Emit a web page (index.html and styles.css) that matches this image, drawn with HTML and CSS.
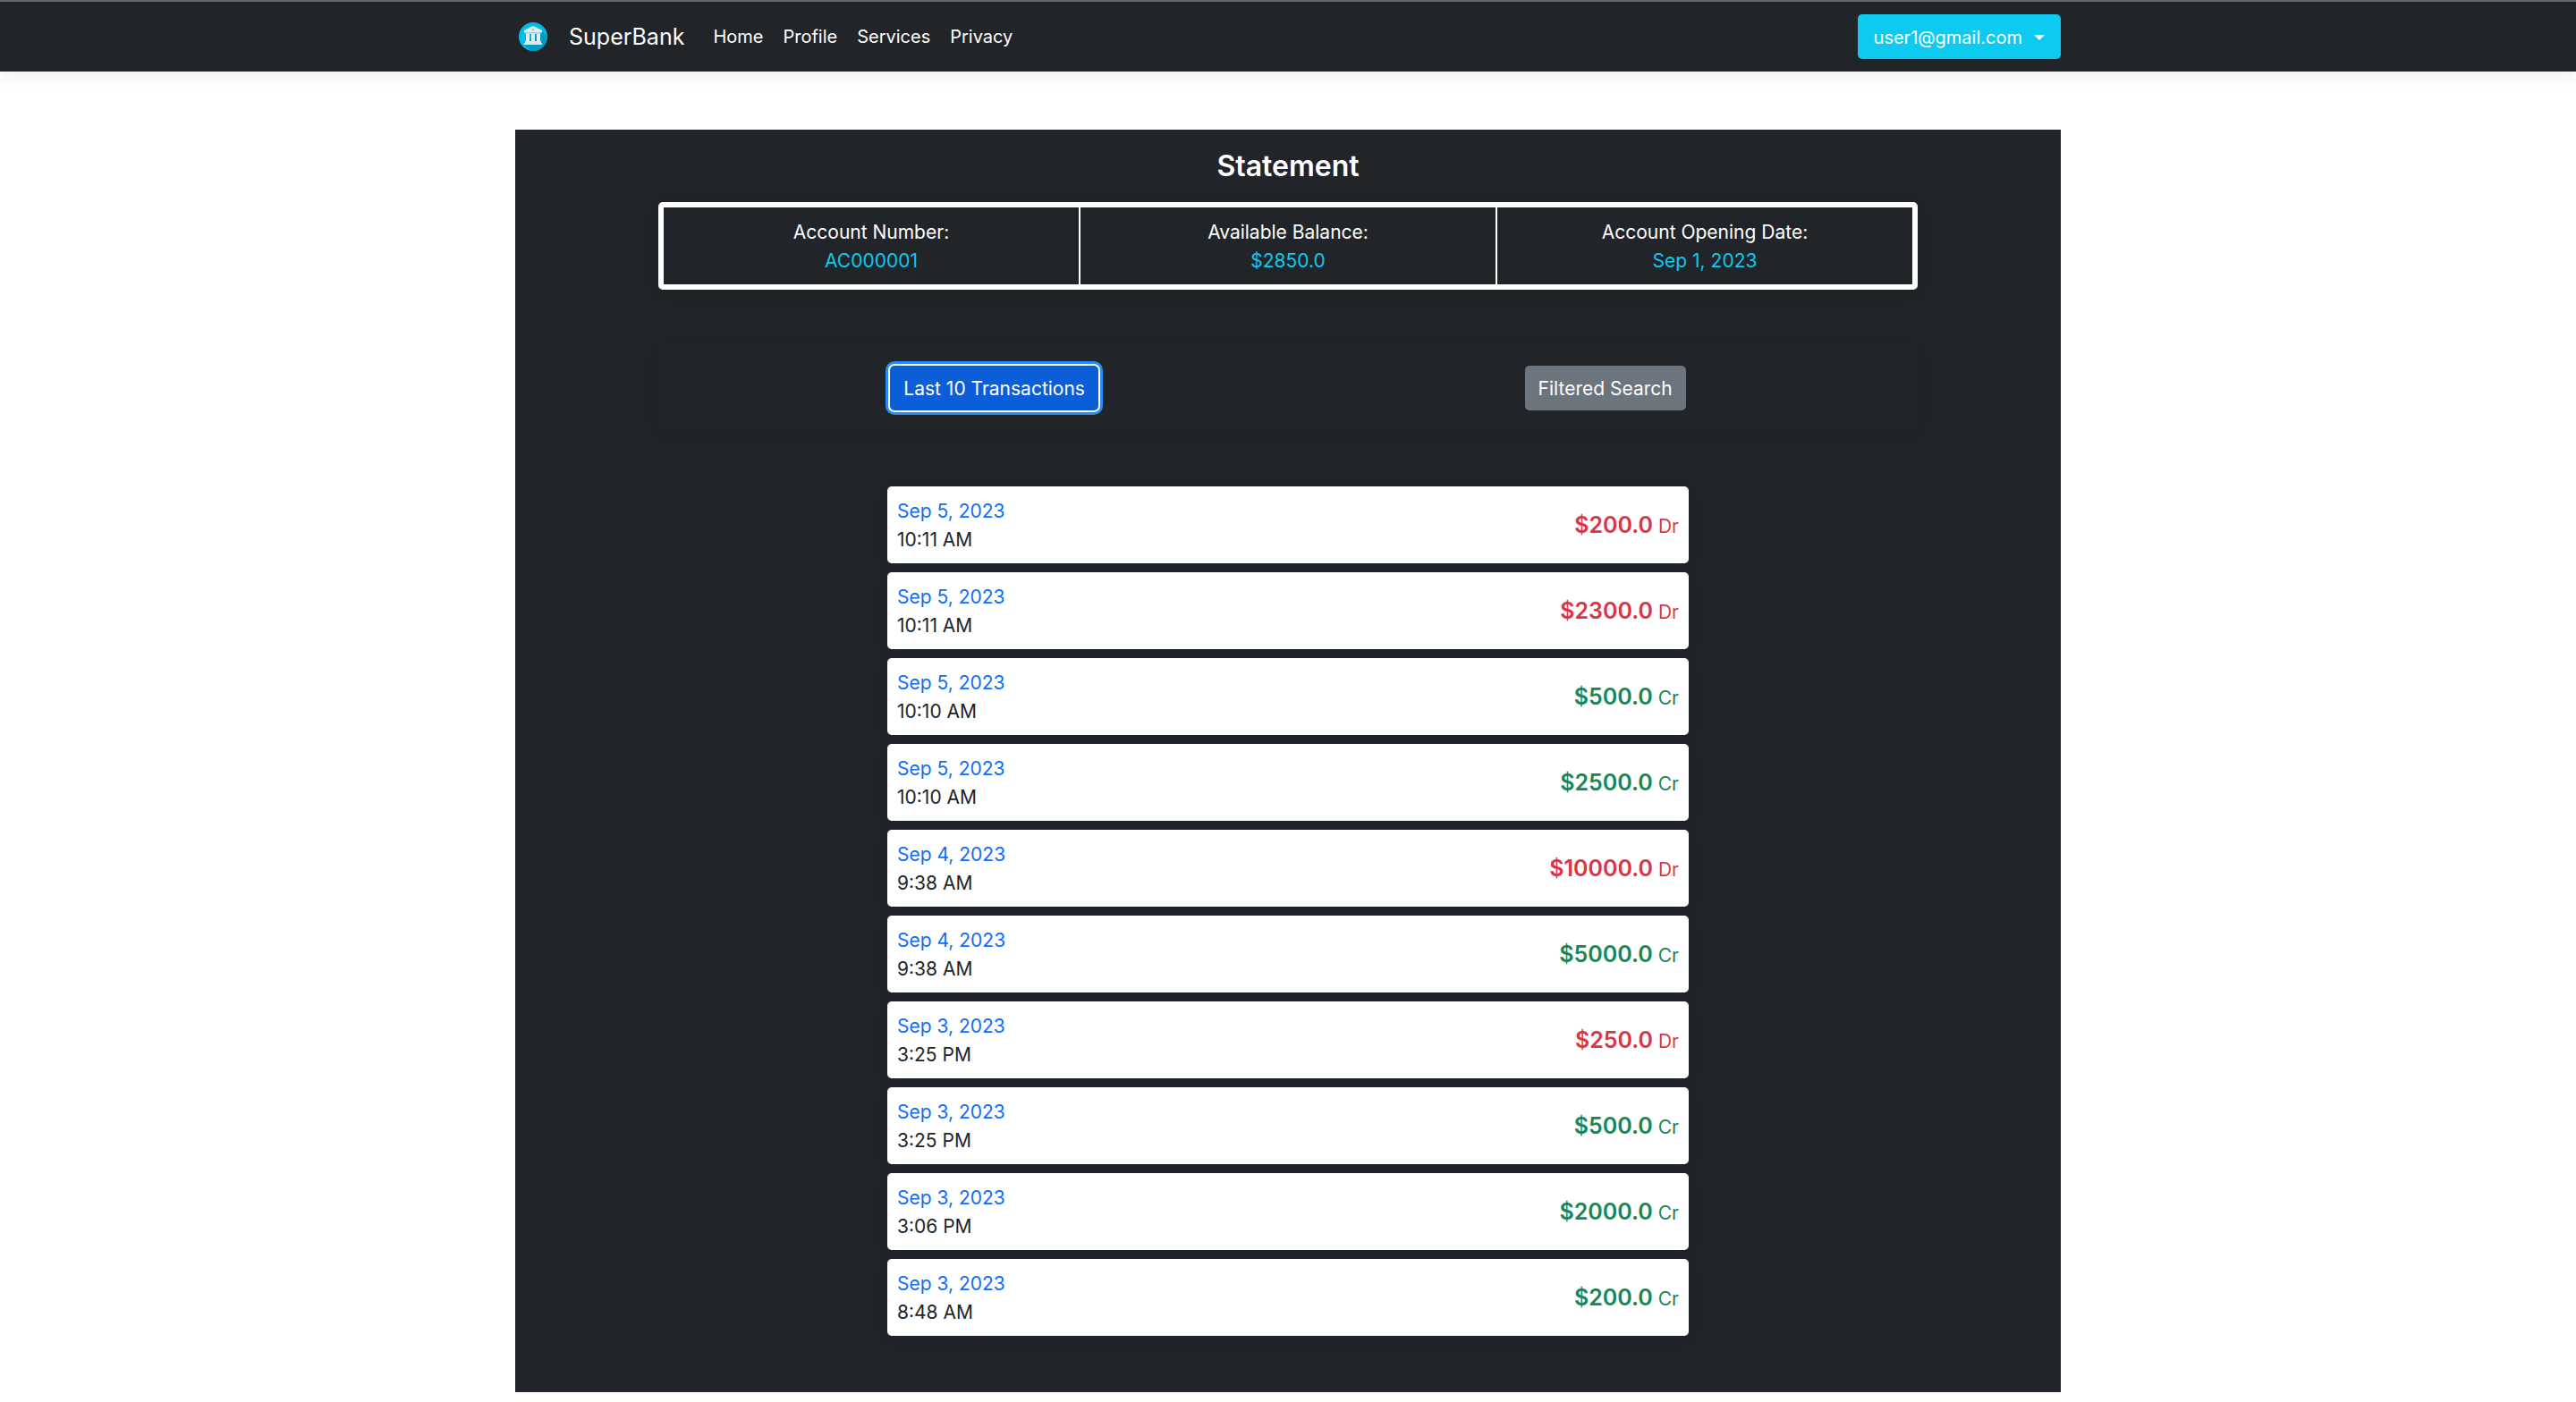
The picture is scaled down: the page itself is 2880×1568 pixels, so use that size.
FILE: index.html
```html
<!DOCTYPE html>
<html lang="en">
<head>
<meta charset="utf-8">
<meta name="viewport" content="width=device-width, initial-scale=1">
<title>SuperBank - Statement</title>
<link rel="stylesheet" href="styles.css">
</head>
<body>
<header class="navbar">
  <div class="container navbar-inner">
    <a class="brand" href="#">
      <svg class="brand-logo" viewBox="0 0 64 64" aria-hidden="true">
        <circle cx="32" cy="32" r="32" fill="#00bce8"/>
        <path d="M51 18 L64 31 A32 32 0 0 1 27 63.600 L12 50 Z" fill="#009dc3"/>
        <path d="M32 8 L52 18 V23 H12 V18 Z" fill="#e9edef"/>
        <path d="M15 23 H49 V26 H15 Z" fill="#cdd5d9"/>
        <path d="M16 26 H24 V43 H16 Z M28 26 H36 V43 H28 Z M40 26 H48 V43 H40 Z" fill="#e9edef"/>
        <path d="M14 42 H50 V46 H52 V50 H12 V46 H14 Z" fill="#dfe5e8"/>
        <circle cx="32" cy="16" r="3" fill="#b4bec4"/>
      </svg>
      <span>SuperBank</span>
    </a>
    <nav class="nav-links">
      <a href="#">Home</a>
      <a href="#">Profile</a>
      <a href="#">Services</a>
      <a href="#">Privacy</a>
    </nav>
    <button class="btn btn-info dropdown-toggle" type="button" aria-haspopup="true">user1@gmail.com</button>
  </div>
</header>
<main class="container panel">
  <h1 class="title">Statement</h1>
  <dl class="summary">
    <div><dt>Account Number:</dt><dd>AC000001</dd></div>
    <div><dt>Available Balance:</dt><dd>$2850.0</dd></div>
    <div><dt>Account Opening Date:</dt><dd>Sep 1, 2023</dd></div>
  </dl>
  <div class="filters">
    <button class="btn btn-primary" type="button">Last 10 Transactions</button>
    <button class="btn btn-secondary" type="button">Filtered Search</button>
  </div>
  <ul class="transactions">
    <li class="debit"><div><p class="date">Sep 5, 2023</p><p>10:11 AM</p></div><p class="amount"><strong>$200.0</strong> Dr</p></li>
    <li class="debit"><div><p class="date">Sep 5, 2023</p><p>10:11 AM</p></div><p class="amount"><strong>$2300.0</strong> Dr</p></li>
    <li class="credit"><div><p class="date">Sep 5, 2023</p><p>10:10 AM</p></div><p class="amount"><strong>$500.0</strong> Cr</p></li>
    <li class="credit"><div><p class="date">Sep 5, 2023</p><p>10:10 AM</p></div><p class="amount"><strong>$2500.0</strong> Cr</p></li>
    <li class="debit"><div><p class="date">Sep 4, 2023</p><p>9:38 AM</p></div><p class="amount"><strong>$10000.0</strong> Dr</p></li>
    <li class="credit"><div><p class="date">Sep 4, 2023</p><p>9:38 AM</p></div><p class="amount"><strong>$5000.0</strong> Cr</p></li>
    <li class="debit"><div><p class="date">Sep 3, 2023</p><p>3:25 PM</p></div><p class="amount"><strong>$250.0</strong> Dr</p></li>
    <li class="credit"><div><p class="date">Sep 3, 2023</p><p>3:25 PM</p></div><p class="amount"><strong>$500.0</strong> Cr</p></li>
    <li class="credit"><div><p class="date">Sep 3, 2023</p><p>3:06 PM</p></div><p class="amount"><strong>$2000.0</strong> Cr</p></li>
    <li class="credit"><div><p class="date">Sep 3, 2023</p><p>8:48 AM</p></div><p class="amount"><strong>$200.0</strong> Cr</p></li>
  </ul>
</main>
</body>
</html>
```
FILE: styles.css
```css
:root {
  --dark: #212529;
  --info: #0dcaf0;
  --shadow: 0 3px 21px rgba(0, 0, 0, 0.08);
}

* {
  box-sizing: border-box;
  margin: 0;
}

body {
  background: #fff;
  color: var(--dark);
  font-family: Inter, "Liberation Sans", sans-serif;
  font-size: 21px;
  line-height: 32px;
}

.container {
  width: 60%;
  margin: 0 auto;
}

.navbar {
  padding: 14px 0;
  border-top: 2px solid #666;
  background: var(--dark);
  box-shadow: var(--shadow);
  font-size: 20px;
}

.navbar-inner {
  display: flex;
  align-items: center;
}

.navbar a {
  color: #fff;
  text-decoration: none;
}

.brand {
  display: flex;
  align-items: center;
  gap: 24px;
  margin-right: 32px;
  padding-left: 4px;
  font-size: 25px;
}

.brand-logo {
  width: 32px;
  height: 32px;
}

.nav-links {
  display: flex;
  gap: 22px;
}

.btn {
  padding: 9px 14px 7px;
  border: 1px solid transparent;
  border-radius: 5px;
  color: #fff;
  font: inherit;
}

.btn-info {
  margin-left: auto;
  background: var(--info);
}

.dropdown-toggle {
  display: flex;
  align-items: center;
  gap: 13px;
  padding-right: 17px;
  padding-left: 17px;
}

.dropdown-toggle::after {
  border: 6px solid transparent;
  border-top-color: #fff;
  border-bottom: 0;
  content: "";
}

.btn-primary {
  background: #0b5ed7;
  box-shadow: 0 0 0 2px #fff, 0 0 0 5px #258cfb;
}

.btn-secondary {
  background: #6c757d;
}

.panel {
  display: flex;
  flex-direction: column;
  align-items: center;
  margin-top: 65px;
  padding: 21px 0 63px;
  background: var(--dark);
}

.title {
  margin-bottom: 20px;
  color: #fff;
  font-size: 32px;
  font-weight: 600;
  line-height: 40px;
}

.summary {
  display: grid;
  grid-template-columns: repeat(3, 1fr);
  gap: 2px;
  width: calc(100% - 320px);
  border: 6px solid #fff;
  border-radius: 5px;
  background: #fff;
  box-shadow: var(--shadow);
  text-align: center;
}

.summary div {
  padding: 12px 11px 10px;
  background: var(--dark);
}

.summary dt {
  color: #fff;
}

.summary dd {
  color: var(--info);
}

.filters {
  display: flex;
  justify-content: space-around;
  width: calc(100% - 320px);
  margin: 64px 0;
  padding: 21px;
  border-radius: 5px;
  box-shadow: var(--shadow);
}

.transactions {
  display: grid;
  gap: 10px;
  width: 896px;
  max-width: 100%;
  padding: 0;
  list-style: none;
}

.transactions li {
  display: flex;
  align-items: center;
  justify-content: space-between;
  padding: 12px 11px 10px;
  border-radius: 5px;
  background: #fff;
  box-shadow: var(--shadow);
}

.date {
  color: #0d6efd;
}

.amount strong {
  font-size: 25px;
  font-weight: 600;
}

.debit .amount {
  color: #dc3545;
}

.credit .amount {
  color: #198754;
}
```
